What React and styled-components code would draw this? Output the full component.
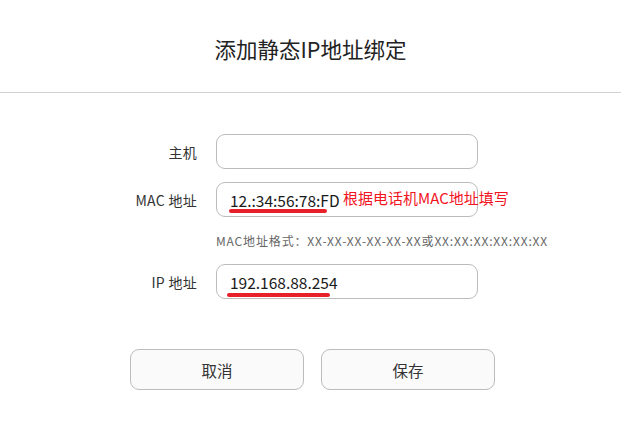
import React from "react";
import styled, { createGlobalStyle } from "styled-components";

const GlobalStyle = createGlobalStyle`
  html, body {
    margin: 0;
    padding: 0;
    background: #fff;
  }
  body {
    font-family: "Noto Sans CJK SC", "Noto Sans", sans-serif;
    color: #333;
  }
`;

const Dialog = styled.div`
  width: 621px;
  height: 446px;
  background: #fff;
`;

const Header = styled.header`
  height: 92px;
  border-bottom: 1px solid #d2d2d2;
  display: flex;
  align-items: center;
  justify-content: center;
`;

const Title = styled.h1`
  margin: 0;
  font-size: 21.5px;
  font-weight: 400;
  color: #222;
  padding-top: 4px;
`;

const Form = styled.form`
  display: flex;
  flex-direction: column;
  padding-top: 41px;
`;

const Row = styled.div`
  display: grid;
  grid-template-columns: 197px 262px;
  column-gap: 19px;
  align-items: center;
  margin-bottom: ${p => p.$gap ?? 13}px;
`;

const Label = styled.label`
  text-align: right;
  font-size: 14px;
  letter-spacing: 0.3px;
  color: #333;
`;

const Field = styled.div`
  position: relative;
  height: 35px;
`;

const Input = styled.input`
  box-sizing: border-box;
  width: 262px;
  height: 35px;
  border: 1px solid #bcbcbc;
  border-radius: 9px;
  padding: 0 13px;
  font-family: "Noto Sans CJK SC", sans-serif;
  font-size: 15.5px;
  color: #1a1a1a;
  background: #fff;
  outline: none;
`;

const Underline = styled.span`
  position: absolute;
  left: ${p => p.$left}px;
  top: ${p => p.$top}px;
  width: ${p => p.$width}px;
  height: 4px;
  border-radius: 2px;
  background: #e8202a;
`;

const Note = styled.span`
  position: absolute;
  left: 127px;
  top: 5px;
  white-space: nowrap;
  font-size: 15px;
  color: #f2141e;
`;

const Hint = styled.div`
  margin-left: 216px;
  font-size: 12px;
  letter-spacing: 0.85px;
  color: #666;
  height: 22px;
  line-height: 22px;
  margin-top: 13px;
  margin-bottom: 12px;
  white-space: nowrap;
`;

const Actions = styled.div`
  display: flex;
  gap: 17px;
  padding-left: 130px;
  margin-top: 50px;
`;

const Button = styled.button`
  box-sizing: border-box;
  width: 174px;
  height: 41px;
  border: 1px solid #bcbcbc;
  border-radius: 9px;
  background: #fafafa;
  font-family: "Noto Sans CJK SC", sans-serif;
  font-size: 15.5px;
  color: #333;
  cursor: pointer;
`;

export default function App() {
  return (
    <>
      <GlobalStyle />
      <Dialog>
        <Header>
          <Title>添加静态IP地址绑定</Title>
        </Header>
        <Form onSubmit={e => e.preventDefault()}>
          <Row>
            <Label>主机</Label>
            <Field>
              <Input defaultValue="" />
            </Field>
          </Row>
          <Row $gap={0}>
            <Label>MAC 地址</Label>
            <Field>
              <Input defaultValue="12.:34:56:78:FD" />
              <Underline $left={13} $top={27} $width={98} />
              <Note>根据电话机MAC地址填写</Note>
            </Field>
          </Row>
          <Hint>MAC地址格式：XX-XX-XX-XX-XX-XX或XX:XX:XX:XX:XX:XX</Hint>
          <Row $gap={0}>
            <Label>IP 地址</Label>
            <Field>
              <Input defaultValue="192.168.88.254" />
              <Underline $left={11} $top={29} $width={103} />
            </Field>
          </Row>
          <Actions>
            <Button type="button">取消</Button>
            <Button type="button">保存</Button>
          </Actions>
        </Form>
      </Dialog>
    </>
  );
}
